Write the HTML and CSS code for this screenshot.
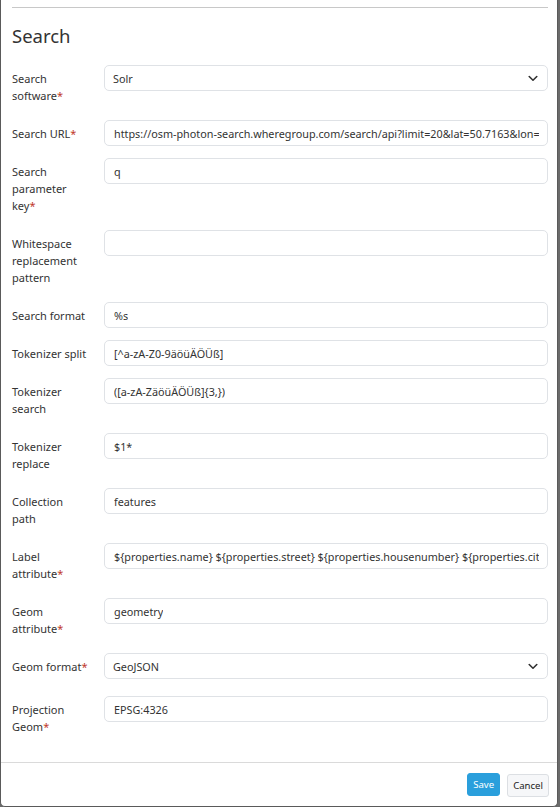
FILE: index.html
```html
<!DOCTYPE html>
<html lang="en">
<head>
<meta charset="utf-8">
<title>Search</title>
<link rel="stylesheet" href="styles.css">
</head>
<body>
<div class="modal">
  <div class="modal-body">
    <hr class="rule">
    <h2 class="title">Search</h2>
    <form class="form">
      <div class="row">
        <label class="label">Search software<span class="req">*</span></label>
        <div class="field select"><span class="value">Solr</span><svg class="chev" width="10" height="7" viewBox="0 0 10 7"><path d="M1.2 1.5 L5 5.2 L8.8 1.5" fill="none" stroke="#333" stroke-width="1.6" stroke-linecap="round" stroke-linejoin="round"/></svg></div>
      </div>
      <div class="row">
        <label class="label">Search URL<span class="req">*</span></label>
        <div class="field"><span class="value">https://osm-photon-search.wheregroup.com/search/api?limit=20&amp;lat=50.7163&amp;lon=7.1069</span></div>
      </div>
      <div class="row">
        <label class="label">Search parameter key<span class="req">*</span></label>
        <div class="field"><span class="value">q</span></div>
      </div>
      <div class="row">
        <label class="label">Whitespace replacement pattern</label>
        <div class="field"><span class="value"></span></div>
      </div>
      <div class="row">
        <label class="label">Search format</label>
        <div class="field"><span class="value">%s</span></div>
      </div>
      <div class="row">
        <label class="label">Tokenizer split</label>
        <div class="field"><span class="value">[^a-zA-Z0-9äöüÄÖÜß]</span></div>
      </div>
      <div class="row">
        <label class="label">Tokenizer search</label>
        <div class="field"><span class="value">([a-zA-ZäöüÄÖÜß]{3,})</span></div>
      </div>
      <div class="row">
        <label class="label">Tokenizer replace</label>
        <div class="field"><span class="value">$1*</span></div>
      </div>
      <div class="row">
        <label class="label">Collection path</label>
        <div class="field"><span class="value">features</span></div>
      </div>
      <div class="row">
        <label class="label">Label attribute<span class="req">*</span></label>
        <div class="field"><span class="value">${properties.name} ${properties.street} ${properties.housenumber} ${properties.city}</span></div>
      </div>
      <div class="row">
        <label class="label">Geom attribute<span class="req">*</span></label>
        <div class="field"><span class="value">geometry</span></div>
      </div>
      <div class="row row-loose">
        <label class="label">Geom format<span class="req">*</span></label>
        <div class="field select"><span class="value">GeoJSON</span><svg class="chev" width="10" height="7" viewBox="0 0 10 7"><path d="M1.2 1.5 L5 5.2 L8.8 1.5" fill="none" stroke="#333" stroke-width="1.6" stroke-linecap="round" stroke-linejoin="round"/></svg></div>
      </div>
      <div class="row">
        <label class="label">Projection Geom<span class="req">*</span></label>
        <div class="field"><span class="value">EPSG:4326</span></div>
      </div>
    </form>
  </div>
  <div class="modal-footer">
    <button type="button" class="btn btn-primary">Save</button>
    <button type="button" class="btn btn-light">Cancel</button>
  </div>
</div>
</body>
</html>
```
FILE: styles.css
```css
* { box-sizing: border-box; }
html, body { margin: 0; padding: 0; }
body {
  background: #6b6b6b;
  font-family: "Noto Sans", "Open Sans", sans-serif;
  color: #333;
  width: 560px;
  height: 807px;
  overflow: hidden;
}
.modal {
  width: 558px;
  height: 807px;
  background: #fff;
  border-left: 1px solid #5a5a5a;
  border-right: 1px solid #5a5a5a;
  border-bottom: 1px solid #5a5a5a;
  border-radius: 0 0 5px 5px;
  display: flex;
  flex-direction: column;
}
.modal-body {
  flex: 1;
  overflow: hidden;
  padding: 7px 9px 0 11px;
}
.rule {
  margin: 0;
  border: 0;
  border-top: 1px solid #c8c8c8;
}
.title {
  margin: 16px 0 17px;
  font-size: 18.5px;
  line-height: 24px;
  font-weight: 400;
  color: #333;
}
.form { display: flex; flex-direction: column; }
.row {
  display: grid;
  grid-template-columns: 92px 1fr;
  align-items: start;
  margin-bottom: 12px;
}
.row-loose { margin-bottom: 17px; }
.label {
  font-size: 11px;
  line-height: 17px;
  padding: 4.5px 15px 4.5px 0;
  color: #333;
}
.req { color: #c0392b; }
.field {
  height: 26px;
  border: 1px solid #dfe2e6;
  border-radius: 5px;
  display: flex;
  align-items: center;
  padding: 0 8px 0 9px;
  font-size: 10.8px;
  color: #333;
  overflow: hidden;
  white-space: nowrap;
  background: #fff;
}
.field.select { padding: 0 9px 0 8px; justify-content: space-between; }
.value { overflow: hidden; white-space: nowrap; }
.chev { flex: none; }
.modal-footer {
  flex: none;
  height: 44px;
  border-top: 1px solid #dadada;
  display: flex;
  justify-content: flex-end;
  align-items: center;
  gap: 7px;
  padding: 0 8px 0 0;
}
.btn {
  font-family: "Noto Sans", "Open Sans", sans-serif;
  font-size: 9.6px;
  height: 23px;
  border-radius: 3px;
  padding: 0 5px;
  cursor: pointer;
}
.btn-primary {
  background: #2a9fdc;
  color: #fff;
  border: 1px solid #2a9fdc;
}
.btn-light {
  background: #f6f7f9;
  color: #222;
  border: 1px solid #dcdfe3;
  margin-top: 1px;
}
```
